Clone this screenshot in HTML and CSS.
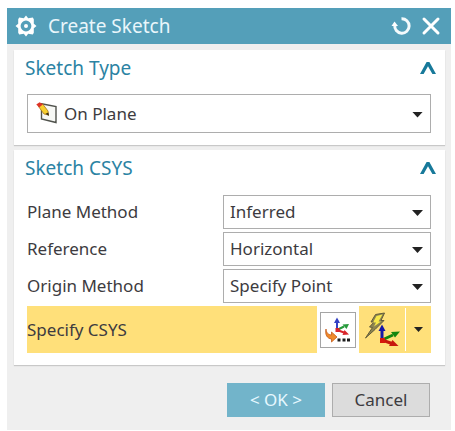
FILE: index.html
```html
<!DOCTYPE html>
<html lang="en">
<head>
<meta charset="utf-8">
<meta name="viewport" content="width=device-width, initial-scale=1">
<title>Create Sketch</title>
<link rel="stylesheet" href="styles.css">
</head>
<body>
<form class="dialog" aria-labelledby="dialog-title">
  <header class="titlebar">
    <svg class="gear" width="22" height="22" viewBox="0 0 22 22" aria-hidden="true">
      <path class="gear-body" fill-rule="evenodd" d="M11 0.5L13.200 3.200L17.800 2.500L18.800 4.200L18.800 8.800L21.500 11L18.800 13.200L18.800 17.800L17.800 19.500L13.200 18.800L11 21.500L8.800 18.800L4.200 19.500L3.200 17.800L3.200 13.200L0.500 11L3.200 8.800L3.200 4.200L4.200 2.500L8.800 3.200ZM11 5.600A5.400 5.400 0 1 0 11 16.400A5.400 5.400 0 1 0 11 5.600Z"/>
      <circle class="gear-body" cx="11" cy="11" r="2"/>
    </svg>
    <h1 class="title" id="dialog-title">Create Sketch</h1>
    <button class="title-button" type="reset" aria-label="Reset">
      <svg width="20" height="20" viewBox="0 0 20 20" aria-hidden="true">
        <path class="title-stroke" d="M10.500 2.800A7.200 7.200 0 1 1 3.800 9"/>
        <path class="gear-body" d="M0.500 10L3.500 5.500L7 10Z"/>
      </svg>
    </button>
    <button class="title-button" type="button" aria-label="Close">
      <svg width="20" height="20" viewBox="0 0 20 20" aria-hidden="true">
        <path class="close-stroke" d="M3 3L17 17M17 3L3 17"/>
      </svg>
    </button>
  </header>

  <div class="content">
    <section class="panel">
      <div class="panel-head">
        <h2 class="panel-title">Sketch Type</h2>
        <button class="collapse" type="button" aria-label="Collapse Sketch Type">
          <svg width="18" height="14" viewBox="0 0 18 14" aria-hidden="true"><path class="chevron" d="M1 13L7.6 1H10.4L17 13H13.4L9 5.2L4.6 13Z"/></svg>
        </button>
      </div>
      <div class="select-box select-box-icon">
        <select class="select" aria-label="Sketch type"><option>On Plane</option></select>
        <svg class="plane-icon" width="22" height="22" viewBox="0 0 22 22" aria-hidden="true">
          <path d="M5.5 1.8L20 4.5V20.5L5.5 17Z" fill="#f7f8f5" stroke="#50524c" stroke-width="1.4"/>
          <path d="M2.500 4.500L6.500 1.800L12 9L12.500 13L8 12Z" fill="#f6cf2e" stroke="#a8741c" stroke-width="0.8"/>
          <path d="M0.300 2.400L3.600 0.300L7 2.200L3.200 5.600Z" fill="#dd3427"/>
          <path d="M9.500 11.800L12.300 10.5L13 14Z" fill="#3b2d12"/>
        </svg>
      </div>
    </section>

    <section class="panel">
      <div class="panel-head">
        <h2 class="panel-title">Sketch CSYS</h2>
        <button class="collapse" type="button" aria-label="Collapse Sketch CSYS">
          <svg width="18" height="14" viewBox="0 0 18 14" aria-hidden="true"><path class="chevron" d="M1 13L7.6 1H10.4L17 13H13.4L9 5.2L4.6 13Z"/></svg>
        </button>
      </div>
      <div class="fields">
        <label class="label" for="plane-method">Plane Method</label>
        <div class="select-box"><select class="select" id="plane-method"><option>Inferred</option></select></div>
        <label class="label" for="reference">Reference</label>
        <div class="select-box"><select class="select" id="reference"><option>Horizontal</option></select></div>
        <label class="label" for="origin-method">Origin Method</label>
        <div class="select-box"><select class="select" id="origin-method"><option>Specify Point</option></select></div>
      </div>
      <div class="csys-row">
        <span class="csys-label">Specify CSYS</span>
        <button class="csys-dialog" type="button" aria-label="CSYS Dialog">
          <svg width="28" height="28" viewBox="0 0 28 28" aria-hidden="true">
            <path d="M13 14V5" stroke="#3340c4" stroke-width="2"/>
            <path d="M13 1.5L16 7H10Z" fill="#3340c4"/>
            <path d="M13 14L20 10.5" stroke="#279a3b" stroke-width="2"/>
            <path d="M25 8L22.5 13L18.5 8.5Z" fill="#279a3b"/>
            <path d="M13 14L20 16.5" stroke="#d8242a" stroke-width="2"/>
            <path d="M25 18.5L18.5 19L20.5 14Z" fill="#d8242a"/>
            <rect x="11.5" y="12" width="4" height="4" fill="#d8242a"/>
            <path d="M2 13C2.500 17 4 18.500 7.500 19V16L13 21L7.500 26V23C3 22.500 0.800 18.500 2 13Z" fill="#ef8a2a" stroke="#c45a1b" stroke-width="0.8"/>
            <path d="M13.500 22.500H16.500V25.500H13.500ZM18.500 22.500H21.500V25.500H18.500ZM23 22.500H26V25.500H23Z" fill="#1c1c1c"/>
          </svg>
        </button>
        <div class="csys-tools">
          <button class="csys-inferred" type="button" aria-label="Inferred CSYS">
            <svg width="36" height="36" viewBox="0 0 36 36" aria-hidden="true">
              <path d="M11.500 2.500L20.500 1L17 8.500H20L11 17.500L1.500 26L8.500 15.500L5.500 15L10 10H7Z" fill="#8d8550" stroke="#625c3a" stroke-width="1"/>
              <path d="M12.500 4L18.500 2.500L14.500 9.500H17L10 14.500L12 10.500H9Z" fill="#f8e94a"/>
              <path d="M18 28V17" stroke="#1717a8" stroke-width="3"/>
              <path d="M18 12.500L21.500 19H14.500Z" fill="#1717a8"/>
              <path d="M18 28L29 23" stroke="#13860f" stroke-width="3"/>
              <path d="M36 19.500L31 25.500L27 20Z" fill="#13860f"/>
              <path d="M18 28L28 31.500" stroke="#c7170d" stroke-width="3"/>
              <path d="M34.500 34L25 34L28.500 28Z" fill="#c7170d"/>
              <rect x="16" y="26" width="5" height="5" fill="#d6180c"/>
            </svg>
          </button>
          <button class="csys-more" type="button" aria-label="More CSYS types"><span class="small-arrow"></span></button>
        </div>
      </div>
    </section>

    <footer class="actions">
      <button class="action action-ok" type="submit">&lt; OK &gt;</button>
      <button class="action" type="button">Cancel</button>
    </footer>
  </div>
</form>
</body>
</html>
```
FILE: styles.css
```css
* {
  box-sizing: border-box;
}

body {
  margin: 8px 4px 1px 7px;
  background: #fff;
  color: #3d3b40;
  font-family: "Noto Sans", "Open Sans", sans-serif;
  font-size: 17px;
  line-height: 24px;
}

button,
select {
  margin: 0;
  padding: 0;
  border: 0;
  background: none;
  color: inherit;
  font: inherit;
}

svg {
  display: block;
  flex: none;
}

.dialog {
  background: #efefef;
}

.titlebar {
  display: flex;
  align-items: center;
  height: 36px;
  padding: 0 10px 0 8px;
  background: #549fb9;
}

.gear-body {
  fill: #fff;
}

.title {
  flex: 1;
  margin: 0 0 0 11px;
  color: #e9f6fb;
  font-size: 19px;
  font-weight: 400;
}

.title-button {
  margin-left: 10px;
}

.title-stroke {
  fill: none;
  stroke: #f4fafc;
  stroke-width: 3;
}

.close-stroke {
  fill: none;
  stroke: #fff;
  stroke-width: 3;
  stroke-linecap: round;
}

.content {
  display: flex;
  flex-direction: column;
  gap: 5px;
  padding: 6px 6px 13px 7px;
}

.panel {
  padding: 5px 14px 12px 13px;
  background: #fff;
  box-shadow: 0 1px 1px #c8c8c8;
}

.panel-head {
  display: flex;
  align-items: center;
  justify-content: space-between;
  height: 26px;
  margin: 0 -6px 13px -2px;
}

.panel-title {
  margin: 0;
  color: #2b83a3;
  font-size: 19px;
  font-weight: 400;
}

.chevron {
  fill: #17799a;
}

.select-box {
  position: relative;
}

.select-box::after {
  content: "";
  position: absolute;
  top: calc(50% - 2px);
  right: 8px;
  width: 11px;
  height: 6px;
  background: #222;
  clip-path: polygon(0 0, 100% 0, 50% 100%);
  pointer-events: none;
}

.select {
  display: block;
  width: 100%;
  height: 34px;
  padding: 0 24px 0 6px;
  border: 1px solid #adadad;
  border-radius: 0;
  background: #fff;
  appearance: none;
}

.select-box-icon .select {
  height: 39px;
  padding-left: 36px;
}

.plane-icon {
  position: absolute;
  top: 8px;
  left: 9px;
  pointer-events: none;
}

.fields {
  display: grid;
  grid-template-columns: 196px 1fr;
  align-items: center;
  row-gap: 3px;
  padding-top: 1px;
}

.csys-row {
  display: flex;
  align-items: stretch;
  height: 47px;
  margin-top: 3px;
}

.csys-label {
  display: flex;
  flex: 1;
  align-items: center;
  background: #ffe07a;
}

.csys-dialog {
  display: flex;
  align-items: center;
  justify-content: center;
  align-self: center;
  width: 36px;
  height: 36px;
  margin: 0 3px;
  border: 1px solid #a5a5a5;
  background: #fff;
}

.csys-tools {
  display: flex;
  background: #ffe07a;
}

.csys-inferred {
  display: flex;
  align-items: center;
  justify-content: center;
  width: 46px;
}

.csys-more {
  display: flex;
  align-items: center;
  justify-content: center;
  width: 26px;
  margin: 2px 0;
  border-left: 1px solid #fff;
}

.small-arrow {
  width: 9px;
  height: 5px;
  background: #222;
  clip-path: polygon(0 0, 100% 0, 50% 100%);
}

.actions {
  display: flex;
  justify-content: flex-end;
  gap: 7px;
  padding: 13px 15px 0 0;
}

.action {
  width: 98px;
  height: 34px;
  border: 1px solid #adadad;
  background: #dcdcdc;
}

.action-ok {
  border-color: #72b4ca;
  background: #72b4ca;
  color: #e6f8ff;
}
```
